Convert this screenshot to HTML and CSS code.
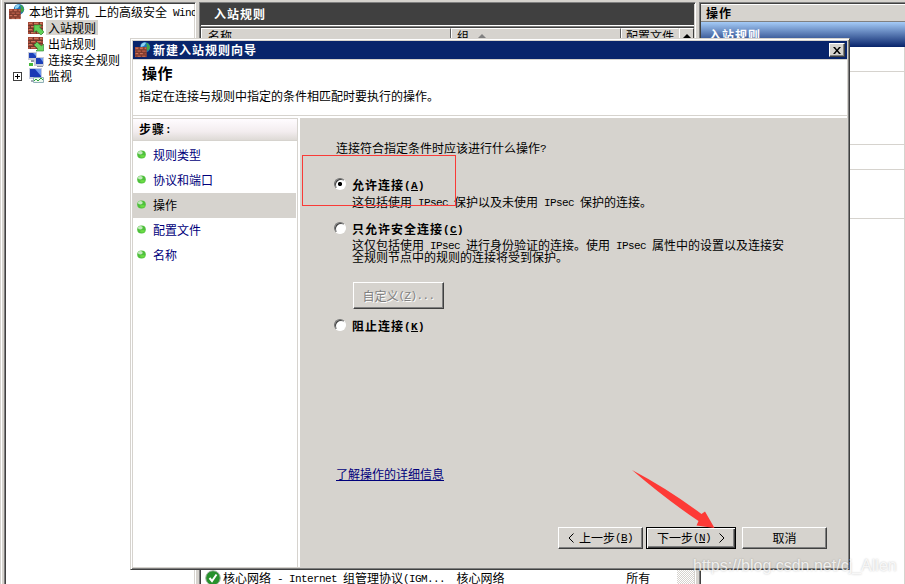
FILE: index.html
```html
<!DOCTYPE html>
<html lang="zh-CN">
  <head>
    <meta charset="UTF-8">
    <title>新建入站规则向导</title>
    <link rel="stylesheet" href="styles.css">
  </head>
  <body>
    <!-- shared icons -->
    <svg class="defs" width="0" height="0">
      <symbol id="bricks" viewBox="0 0 16 12">
        <path fill="#a54a38" d="M0 0h15v12H0z"/>
        <path fill="#cf7a62" d="M1 1h3v1H1zM6 1h4v1H6zM12 1h2v1h-2zM3 4h4v1H3zM9 4h4v1H9zM1 7h3v1H1zM6 7h4v1H6zM3 10h4v1H3zM9 10h4v1H9z"/>
        <path stroke="#70382c" fill="none" d="M0 3.5h15M0 6.5h15M0 9.5h15M5.5 0v3M11.5 0v3M2.5 4v2M8.5 4v2M5.5 7v2M11.5 7v2M2.5 10v2M8.5 10v2"/>
      </symbol>
      <symbol id="firewall" viewBox="0 0 16 16">
        <circle cx="10" cy="5.2" r="5.2" fill="#1c73bb"/>
        <path fill="#8ed3f2" d="M6 3c1-2 3-3 5-2L9 4 6 5z"/>
        <path fill="#3fa64a" d="M11 1c2 0 4 2 4 5l-2 3-2-3 1-2z"/>
        <g transform="translate(0 5) scale(.78 .86)"><use href="#bricks" width="16" height="12"/></g>
      </symbol>
      <symbol id="inbound" viewBox="0 0 16 16">
        <use href="#bricks" y="2" width="16" height="12"/>
        <path fill="#5fd058" stroke="#23832c" stroke-width=".6" d="M6 5h7.500l-2 2 4.500 5-3 3-5-4.500-2 2z"/>
      </symbol>
      <symbol id="outbound" viewBox="0 0 16 16">
        <use href="#bricks" y="1" width="16" height="12"/>
        <path fill="#6bd662" stroke="#23832c" stroke-width=".6" d="M15.500 15H8l2-2-4-4 3-3 4.500 4 2-2z"/>
      </symbol>
      <symbol id="connsec" viewBox="0 0 16 16">
        <path fill="#c9ccd8" d="M0 0h9v8H0zM6 5h10v9H6z"/>
        <path fill="#1c3fb8" d="M1 1h7v5H1zM8 6h7v6H8z"/>
        <path fill="#6f9cf0" d="M5 1h3v3zM12 6h3v4z"/>
        <path fill="#8f96a8" d="M3 8h3v2H3zM9 14h6v1H9z"/>
        <path fill="#45b83c" d="M1 11h4v3H1z"/>
      </symbol>
      <symbol id="monitor" viewBox="0 0 16 16">
        <path fill="#c5cbe0" d="M1 0h13v11H1z"/>
        <path fill="#1939b5" d="M2 1h11v8H2z"/>
        <path fill="#6c98ef" d="M7 1h6v7z"/>
        <path fill="#a5aab8" d="M3 12h4v2H3z"/>
        <path fill="#eef8ee" stroke="#8fb0b8" d="M5.500 9.500h10v5h-10z"/>
        <path fill="none" stroke="#2fa53a" d="M6 13l2-2 2 2 3-3 2 2"/>
      </symbol>
      <symbol id="ball" viewBox="0 0 9 9">
        <ellipse cx="4.500" cy="4.500" rx="4.300" ry="3.900" fill="#4fc03c"/>
        <ellipse cx="3.300" cy="2.800" rx="2.400" ry="1.700" fill="#c4e9bf"/>
        <ellipse cx="5.500" cy="6.300" rx="2.400" ry="1.300" fill="#6bdc45"/>
      </symbol>
    </svg>

    <div class="console">
      <div class="tree sunken">
        <div class="node root"><svg><use href="#firewall"/></svg><span>本地计算机<span class="en"> </span>上的高级安全<span class="en"> Wind</span></span></div>
        <div class="node"><svg><use href="#inbound"/></svg><span class="selected">入站规则</span></div>
        <div class="node"><svg><use href="#outbound"/></svg><span>出站规则</span></div>
        <div class="node"><svg><use href="#connsec"/></svg><span>连接安全规则</span></div>
        <div class="node expandable"><i class="plus"></i><svg><use href="#monitor"/></svg><span>监视</span></div>
      </div>

      <div class="rules sunken">
        <div class="rules-title">入站规则</div>
        <div class="rules-list">
          <div class="columns">
            <div class="col name">名称</div>
            <div class="col group">组<i class="sort"></i></div>
            <div class="col profile">配置文件</div>
            <div class="scroll-up"><i></i></div>
          </div>
          <div class="rule-row">
            <div class="cell name">
              <svg class="ok" viewBox="0 0 16 16"><circle cx="8" cy="8" r="7.300" fill="#27912c" stroke="#a9b5aa"/><path d="M4.500 8l2.500 3 4.500-6.500" fill="none" stroke="#fff" stroke-width="2"/></svg>
              <span>核心网络<span class="en"> - Internet </span>组管理协议<span class="en">(IGM...</span></span>
            </div>
            <div class="cell group">核心网络</div>
            <div class="cell profile">所有</div>
            <div class="track"></div>
          </div>
        </div>
      </div>

      <div class="actions sunken">
        <div class="actions-title">操作</div>
        <div class="actions-group">入站规则</div>
        <div class="slot first"></div>
        <div class="slot second"></div>
        <div class="slot third"></div>
        <div class="slot fourth"></div>
      </div>
    </div>

    <div class="dialog">
      <div class="titlebar">
        <svg><use href="#firewall"/></svg>
        <span>新建入站规则向导</span>
        <button class="close"><svg viewBox="0 0 8 7"><path d="M0 0h2l2 2.500L6 0h2L5 3.500 8 7H6L4 4.500 2 7H0l3-3.500z"/></svg></button>
      </div>
      <div class="banner">
        <h1>操作</h1>
        <p>指定在连接与规则中指定的条件相匹配时要执行的操作。</p>
      </div>
      <div class="content">
        <div class="steps">
          <h2>步骤<span class="en">:</span></h2>
          <ul>
            <li><svg><use href="#ball"/></svg>规则类型</li>
            <li><svg><use href="#ball"/></svg>协议和端口</li>
            <li class="current"><svg><use href="#ball"/></svg>操作</li>
            <li><svg><use href="#ball"/></svg>配置文件</li>
            <li><svg><use href="#ball"/></svg>名称</li>
          </ul>
        </div>
        <div class="page">
          <p class="question">连接符合指定条件时应该进行什么操作<span class="en">?</span></p>

          <div class="option allow">
            <i class="radio checked"></i>
            <div>
              <b>允许连接<span class="en">(<u>A</u>)</span></b>
              <p>这包括使用<span class="en"> IPsec </span>保护以及未使用<span class="en"> IPsec </span>保护的连接。</p>
            </div>
          </div>

          <div class="option secure">
            <i class="radio"></i>
            <div>
              <b>只允许安全连接<span class="en">(<u>C</u>)</span></b>
              <p>这仅包括使用<span class="en"> IPsec </span>进行身份验证的连接。使用<span class="en"> IPsec </span>属性中的设置以及连接安<br>全规则节点中的规则的连接将受到保护。</p>
              <button class="btn customize" disabled>自定义<span class="en">(<u>Z</u>)...</span></button>
            </div>
          </div>

          <div class="option block">
            <i class="radio"></i>
            <div><b>阻止连接<span class="en">(<u>K</u>)</span></b></div>
          </div>

          <a class="learn" href="#">了解操作的详细信息</a>

          <div class="buttons">
            <button class="btn"><svg class="chev" viewBox="0 0 6 10"><path d="M5.500.5L1 5l4.500 4.500"/></svg>上一步<span class="en">(<u>B</u>)</span></button>
            <button class="btn default">下一步<span class="en">(<u>N</u>)</span><svg class="chev next" viewBox="0 0 6 10"><path d="M.5.5L5 5 .5 9.500"/></svg></button>
            <button class="btn cancel">取消</button>
          </div>
        </div>
      </div>
    </div>

    <!-- annotations -->
    <div class="mark"></div>
    <svg class="arrow" viewBox="0 0 84 60"><path d="M0 0Q36 19 69.500 44L73 41.500 82.500 58 64.500 55.500 66.500 51Q35 30 0 0z"/></svg>
    <div class="watermark">https://blog.csdn.net/cj_Allen</div>
  </body>
</html>
```
FILE: styles.css
```css
*{
  box-sizing: border-box;
  margin: 0;
  padding: 0;
}

body{
  position: relative;
  width: 905px;
  height: 584px;
  overflow: hidden;
  background-color: #d6d3ce;
  color: #000;
  font: 12px/16px "Noto Sans CJK SC", sans-serif;
  white-space: nowrap;
}

svg{
  display: block;
  flex: none;
}

.defs{
  position: absolute;
}

/* half-width characters, 6px each */
.en{
  font-family: "Liberation Mono", monospace;
  font-size: 11px;
  letter-spacing: -0.6px;
  line-height: 0;
  vertical-align: 1px;
  white-space: pre;
}

b .en,
h2 .en{
  letter-spacing: 0.4px;
}

/* ---- console behind the dialog ---- */
.console{
  display: flex;
  height: 600px;
  padding: 2px 0 0 4px;
  box-shadow: inset 1px 0 #d6d3ce, inset 2px 0 #fff;
}

.sunken{
  border: 1px solid;
  border-color: #808080 #fff #fff #808080;
  box-shadow: inset 1px 1px #404040, inset -1px 0 #d6d3ce;
  background-color: #fff;
  flex: none;
}

.tree{
  width: 192px;
  margin-right: 3px;
  padding: 1px 2px 0 1px;
  overflow: hidden;
}

.node{
  display: flex;
  align-items: flex-start;
  height: 16px;
  padding-left: 22px;
}

.node svg{
  width: 16px;
  height: 16px;
  margin-right: 3px;
}

.node > span{
  padding: 0 2px;
  margin-left: -1px;
  line-height: 15px;
}

.node > .selected{
  background-color: #d6d3ce;
}

.root{
  padding-left: 3px;
}

.root > span{
  padding: 0;
  margin-left: 1px;
}

.expandable{
  padding-left: 7px;
}

.plus{
  width: 9px;
  height: 9px;
  margin: 4px 6px 0 0;
  border: 1px solid #404040;
  background: linear-gradient(#000,#000) center/5px 1px no-repeat, linear-gradient(#000,#000) center/1px 5px no-repeat;
}

.rules{
  width: 497px;
  margin-right: 3px;
  padding-right: 1px;
}

.rules-title{
  height: 22px;
  padding-left: 14px;
  border-right: 1px solid #404040;
  background-color: #404040;
  color: #fff;
  font-weight: bold;
  letter-spacing: 1px;
  line-height: 21px;
}

.rules-list{
  height: 570px;
  margin-top: 1px;
  border-top: 1px solid #808080;
  border-left: 1px solid #404040;
  box-shadow: inset 0 1px #404040;
  padding-top: 1px;
}

.columns{
  display: flex;
  height: 18px;
  background-color: #d6d3ce;
}

.col{
  padding-left: 6px;
  border-left: 1px solid #fff;
  border-top: 1px solid #fff;
  border-right: 1px solid #606060;
  line-height: 14px;
}

.name{
  width: 250px;
}

.group{
  width: 170px;
}

.profile{
  width: 58px;
}

.col.profile{
  padding-left: 4px;
  border-right-color: #d6d3ce;
}

.col.group{
  display: flex;
  align-items: flex-start;
  padding-left: 5px;
}

.sort{
  margin: 5px 0 0 9px;
  border: 4px solid transparent;
  border-top: 0;
  border-bottom-color: #808080;
}

.scroll-up{
  width: 15px;
  padding: 5px 0 0 3px;
  border: 1px solid;
  border-color: #fff #404040 #404040 #fff;
}

.scroll-up i{
  display: block;
  width: 0;
  border: 4px solid transparent;
  border-top: 0;
  border-bottom-color: #000;
}

.rule-row{
  display: flex;
  height: 18px;
  margin-top: 524px;
}

.cell{
  line-height: 16px;
}

.cell.name{
  display: flex;
  padding-left: 4px;
  width: 256px;
}

.ok{
  width: 16px;
  height: 16px;
  margin-right: 2px;
}

.cell.profile{
  width: 51px;
}

.track{
  width: 17px;
  background: repeating-conic-gradient(#fff 0 25%, #d6d3ce 0 50%) 0 0/2px 2px;
}

.actions{
  width: 207px;
  padding: 1px 0 0 1px;
}

.actions-title,
.actions-group{
  font-weight: bold;
  letter-spacing: 1px;
}

.actions-title{
  height: 18px;
  padding-left: 5px;
  border-top: 1px solid #fff;
  border-bottom: 1px solid #808080;
  background-color: #d6d3ce;
  line-height: 15px;
}

.actions-group{
  height: 25px;
  padding: 3px 0 0 8px;
  background: linear-gradient(#a5cbf7, #08246b);
  color: #fff;
  line-height: 19px;
}

.slot{
  border-bottom: 1px solid #d6d3ce;
}

.first{
  height: 25px;
}

.second{
  height: 73px;
}

.third{
  height: 25px;
}

.fourth{
  height: 49px;
}

/* ---- wizard ---- */
.dialog{
  position: absolute;
  left: 130px;
  top: 38px;
  display: flex;
  flex-direction: column;
  width: 720px;
  height: 532px;
  padding: 2px;
  border: 1px solid;
  border-color: #d6d3ce #404040 #404040 #d6d3ce;
  box-shadow: inset 1px 1px #fff, inset -1px -1px #808080;
  background-color: #d6d3ce;
}

.titlebar{
  display: flex;
  align-items: center;
  height: 18px;
  padding: 0 2px;
  margin-bottom: 1px;
  background-color: #08246b;
  color: #fff;
  font-weight: bold;
  letter-spacing: 1px;
}

.titlebar > svg{
  width: 16px;
  height: 16px;
  margin-right: 2px;
}

.close{
  display: flex;
  align-items: center;
  justify-content: center;
  width: 16px;
  height: 14px;
  margin-left: auto;
  border: 1px solid;
  border-color: #fff #404040 #404040 #fff;
  box-shadow: inset -1px -1px #808080;
  background-color: #d6d3ce;
}

.close svg{
  width: 8px;
  height: 7px;
}

.banner{
  height: 56px;
  padding: 4px 6px 0;
  border-bottom: 1px solid #d6d3ce;
  background-color: #fff;
}

.banner h1{
  padding-left: 3px;
  font-size: 15px;
  line-height: 18px;
  letter-spacing: 0.5px;
}

.banner p{
  margin-top: 6px;
}

.content{
  display: flex;
  flex: 1;
  border-top: 2px solid #fff;
}

.steps{
  display: flex;
  flex-direction: column;
  width: 167px;
  border-right: 2px solid #fff;
  background-color: #fff;
}

.steps h2{
  height: 23px;
  padding-left: 6px;
  border-top: 1px solid #d6d3ce;
  border-bottom: 1px solid #d6d3ce;
  background: linear-gradient(#fffcff, #f3edef 60%, #dedad6);
  font-size: 12px;
  letter-spacing: 1px;
  line-height: 20px;
}

.steps ul{
  flex: 1;
  padding: 2px 1px 0 0;
  list-style: none;
}

.steps h2,
.steps ul{
  border-right: 1px solid #d6d3ce;
}

.steps li{
  display: flex;
  align-items: center;
  height: 25px;
  padding: 0 0 2px 4px;
  color: #00007b;
}

.steps li svg{
  width: 9px;
  height: 9px;
  margin-right: 7px;
}

.steps .current{
  background-color: #d6d3ce;
  color: #000;
}

.page{
  display: flex;
  flex-direction: column;
  width: 547px;
  padding: 22px 0 0 36px;
}

.question{
  height: 16px;
}

.option{
  display: flex;
  margin-left: -2px;
}

.option b{
  display: block;
  height: 16px;
  margin-top: 1px;
  letter-spacing: 1px;
}

.option p{
  margin-top: 3px;
  line-height: 12px;
}

.allow{
  margin-top: 20px;
}

.secure{
  margin-top: 12px;
}

.secure p{
  margin-top: 2px;
}

.block{
  margin-top: 8px;
}

.radio{
  width: 12px;
  height: 12px;
  margin: 2px 6px 0 0;
  border: 1px solid;
  border-color: #707070 #fff #fff #707070;
  border-radius: 50%;
  background-color: #fff;
  box-shadow: inset 1px 1px #404040;
}

.checked{
  background: radial-gradient(circle at 5px 5px, #000 1.8px, #fff 2.4px);
}

.btn{
  display: flex;
  align-items: center;
  justify-content: center;
  width: 85px;
  height: 22px;
  border: 1px solid;
  border-color: #fff #404040 #404040 #fff;
  box-shadow: inset -1px -1px #808080;
  background-color: #d6d3ce;
  color: #000;
  font: inherit;
}

.customize{
  width: 91px;
  height: 27px;
  margin: 19px 0 0 1px;
  color: #808080;
  text-shadow: 1px 1px #fff;
}

.default{
  width: 90px;
  border-color: #000;
  box-shadow: inset 1px 1px #fff, inset -1px -1px #404040, inset -2px -2px #808080;
}

.chev{
  width: 6px;
  height: 10px;
  margin-right: 5px;
  fill: none;
  stroke: #000;
}

.next{
  margin: 0 0 0 8px;
}

.learn{
  align-self: flex-start;
  margin-top: 132px;
  color: #00007b;
}

.buttons{
  display: flex;
  gap: 3px;
  margin: auto 0 18px 222px;
}

.cancel{
  margin-left: 3px;
}

/* ---- annotations ---- */
.mark{
  position: absolute;
  left: 302px;
  top: 155px;
  width: 154px;
  height: 51px;
  border: 1px solid #f93a37;
}

.arrow{
  position: absolute;
  left: 632px;
  top: 470px;
  width: 84px;
  height: 60px;
  fill: #fd3a36;
}

.watermark{
  position: absolute;
  left: 693px;
  top: 556px;
  color: rgba(255,255,255,.8);
  font: 16px/20px "Liberation Sans", sans-serif;
  text-shadow: 0 0 2px rgba(0,0,0,.25);
}
```
